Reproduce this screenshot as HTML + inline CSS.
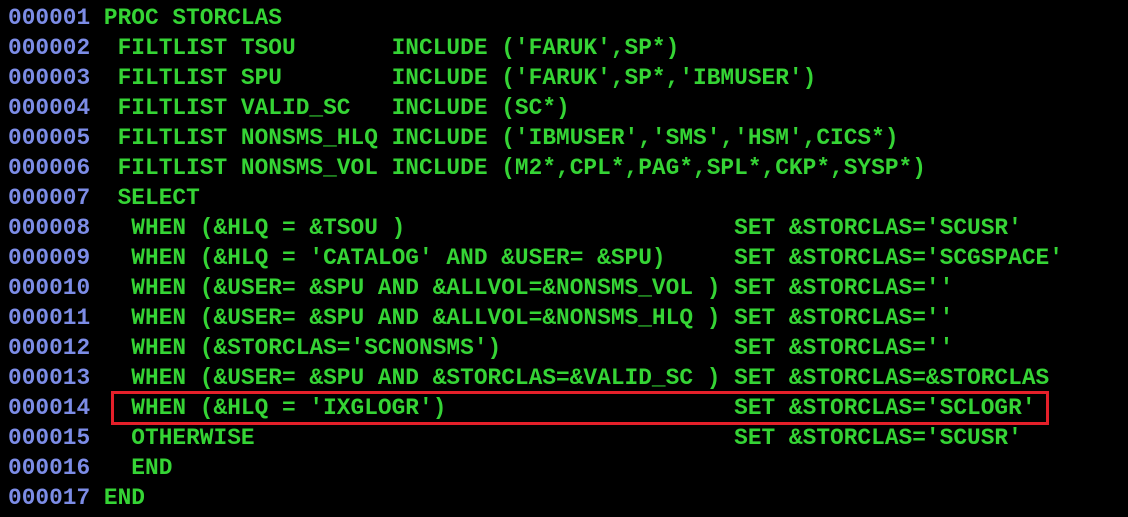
<!DOCTYPE html>
<html><head><meta charset="utf-8"><style>
html,body{margin:0;padding:0;background:#000;width:1128px;height:517px;overflow:hidden}
pre{position:absolute;left:8px;top:3px;margin:0;font-family:"Liberation Mono",monospace;font-size:22.8px;line-height:30px;color:#35d435;font-weight:bold;letter-spacing:0.02px;white-space:pre}
.n{color:#7c8ce6}
.box{position:absolute;left:111px;top:391px;width:932px;height:28px;border:3px solid #e5202a}
</style></head><body>
<pre><span class="n">000001</span> PROC STORCLAS
<span class="n">000002</span>  FILTLIST TSOU       INCLUDE ('FARUK',SP*)
<span class="n">000003</span>  FILTLIST SPU        INCLUDE ('FARUK',SP*,'IBMUSER')
<span class="n">000004</span>  FILTLIST VALID_SC   INCLUDE (SC*)
<span class="n">000005</span>  FILTLIST NONSMS_HLQ INCLUDE ('IBMUSER','SMS','HSM',CICS*)
<span class="n">000006</span>  FILTLIST NONSMS_VOL INCLUDE (M2*,CPL*,PAG*,SPL*,CKP*,SYSP*)
<span class="n">000007</span>  SELECT
<span class="n">000008</span>   WHEN (&amp;HLQ = &amp;TSOU )                        SET &amp;STORCLAS='SCUSR'
<span class="n">000009</span>   WHEN (&amp;HLQ = 'CATALOG' AND &amp;USER= &amp;SPU)     SET &amp;STORCLAS='SCGSPACE'
<span class="n">000010</span>   WHEN (&amp;USER= &amp;SPU AND &amp;ALLVOL=&amp;NONSMS_VOL ) SET &amp;STORCLAS=''
<span class="n">000011</span>   WHEN (&amp;USER= &amp;SPU AND &amp;ALLVOL=&amp;NONSMS_HLQ ) SET &amp;STORCLAS=''
<span class="n">000012</span>   WHEN (&amp;STORCLAS='SCNONSMS')                 SET &amp;STORCLAS=''
<span class="n">000013</span>   WHEN (&amp;USER= &amp;SPU AND &amp;STORCLAS=&amp;VALID_SC ) SET &amp;STORCLAS=&amp;STORCLAS
<span class="n">000014</span>   WHEN (&amp;HLQ = 'IXGLOGR')                     SET &amp;STORCLAS='SCLOGR'
<span class="n">000015</span>   OTHERWISE                                   SET &amp;STORCLAS='SCUSR'
<span class="n">000016</span>   END
<span class="n">000017</span> END</pre>
<div class="box"></div>
</body></html>
